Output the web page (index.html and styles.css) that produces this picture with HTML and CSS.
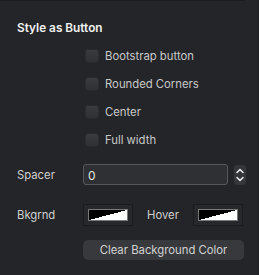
FILE: index.html
```html
<!DOCTYPE html>
<html lang="en">
<head>
  <meta charset="UTF-8">
  <title>Style as Button</title>
  <link rel="stylesheet" href="styles.css">
</head>
<body>
  <div class="panel">
    <div class="topline"></div>
    <h2 class="title">Style as Button</h2>

    <div class="checks">
      <label class="check"><span class="box"></span>Bootstrap button</label>
      <label class="check"><span class="box"></span>Rounded Corners</label>
      <label class="check"><span class="box"></span>Center</label>
      <label class="check"><span class="box"></span>Full width</label>
    </div>

    <div class="row spacer-row">
      <span class="label">Spacer</span>
      <input class="num" type="text" value="0">
      <span class="stepper">
        <svg width="12" height="20" viewBox="0 0 12 20">
          <path d="M3 7.5 L6 4.5 L9 7.5" fill="none" stroke="#e8e8e8" stroke-width="1.6" stroke-linecap="round" stroke-linejoin="round"/>
          <path d="M3 12.5 L6 15.5 L9 12.5" fill="none" stroke="#e8e8e8" stroke-width="1.6" stroke-linecap="round" stroke-linejoin="round"/>
        </svg>
      </span>
    </div>

    <div class="row color-row">
      <span class="label">Bkgrnd</span>
      <span class="well"><span class="swatch"></span></span>
      <span class="label hover-label">Hover</span>
      <span class="well"><span class="swatch"></span></span>
    </div>

    <div class="row">
      <button class="clear">Clear Background Color</button>
    </div>
  </div>
</body>
</html>
```

FILE: styles.css
```css
html, body {
  margin: 0;
  padding: 0;
  background-color: #242528;
}

body {
  font-family: Inter, "Noto Sans", sans-serif;
  font-size: 11.3px;
  color: #cfcfcf;
  width: 259px;
  height: 275px;
  overflow: hidden;
}

.panel {
  height: 275px;
  box-sizing: border-box;
  border-right: 1px solid #1f2023;
}

.topline {
  width: 245px;
  height: 1px;
  background-color: #1b1c1e;
}

.title {
  margin: 0;
  padding: 19px 0 0 17px;
  font-size: 11.8px;
  font-weight: 600;
  color: #f2f2f2;
  line-height: 16px;
}

.checks {
  display: flex;
  flex-direction: column;
  gap: 14px;
  padding: 13px 0 0 85px;
}

.check {
  display: flex;
  align-items: center;
  gap: 6px;
  height: 14px;
  line-height: 14px;
  color: #c9c9c9;
}

.box {
  width: 14px;
  height: 14px;
  border-radius: 3px;
  background: linear-gradient(#3a3b3e, #2f3033);
  box-sizing: border-box;
  border: 1px solid #2a2b2e;
}

.row {
  display: flex;
  align-items: center;
  padding-left: 17px;
}

.label {
  width: 66px;
  color: #cfcfcf;
}

.spacer-row {
  margin-top: 17px;
  height: 21px;
}

.num {
  width: 145px;
  height: 21px;
  box-sizing: border-box;
  margin: 0;
  padding: 1px 4px 0;
  border: 1px solid #56575a;
  border-radius: 3px;
  background-color: #2f3033;
  color: #e6e6e6;
  font-family: inherit;
  font-size: 12px;
  outline: none;
}

.stepper {
  display: flex;
  margin-left: 6px;
  width: 12px;
  height: 20px;
  border-radius: 3px;
  background-color: #35363a;
}

.color-row {
  margin-top: 19px;
  height: 22px;
}

.well {
  display: flex;
  align-items: center;
  justify-content: center;
  width: 50px;
  height: 22px;
  box-sizing: border-box;
  border: 1px solid #1a1b1d;
  background-color: #27282b;
}

.swatch {
  width: 40px;
  height: 12px;
  box-sizing: border-box;
  border: 1px solid #7a7a7a;
  background: linear-gradient(to top left, #ffffff 50%, #000000 50%);
}

.hover-label {
  width: auto;
  margin: 0 14px 0 14px;
}

.clear {
  margin: 14px 0 0 66px;
  width: 161px;
  height: 20px;
  border: none;
  border-radius: 5px;
  background-color: #38393c;
  color: #d2d2d2;
  font-family: inherit;
  font-size: 11.3px;
  padding: 0;
}
```
